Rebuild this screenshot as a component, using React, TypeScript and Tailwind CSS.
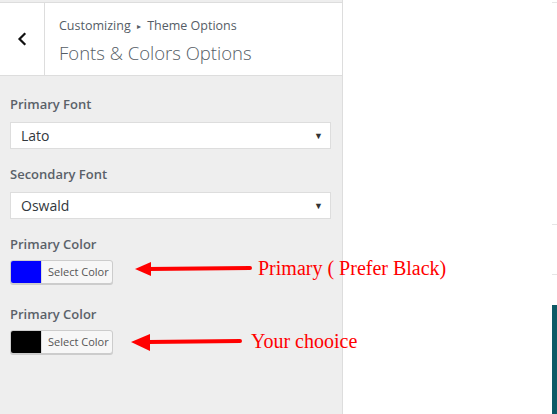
import React from "react";

const ui = { fontFamily: '"Open Sans", "Noto Sans", sans-serif' };
const serif = { fontFamily: '"Liberation Serif", "Times New Roman", serif' };

function Select({ value }: { value: string }) {
  return (
    <div className="w-[321px] h-[27px] bg-white border border-[#dddddd] flex items-center justify-between pl-[10px] pr-[7px] text-[14px] text-[#32373c]">
      <span>{value}</span>
      <span className="text-[9px] text-[#333]">▼</span>
    </div>
  );
}

function ColorButton({ color }: { color: string }) {
  return (
    <div className="w-[103px] h-[24px] flex border border-[#cccccc] rounded-[3px] overflow-hidden bg-[#f7f7f7] shadow-[0_1px_0_#ccc]">
      <div className="w-[30px] h-full" style={{ background: color }} />
      <div className="flex-1 flex items-center pl-[6px] text-[11px] text-[#555] border-l border-[#dddddd]">Select Color</div>
    </div>
  );
}

export default function App() {
  return (
    <div className="relative w-[557px] h-[414px] flex bg-white overflow-hidden" style={ui}>
      <div className="w-[343px] h-full bg-[#eeeeee] border-r border-[#dddddd] pt-[2px] flex flex-col">
        <div className="h-[74px] bg-white border-t border-b border-[#dddddd] flex">
          <div className="w-[45px] border-r border-[#dddddd] flex items-center justify-center">
            <svg width="12" height="14" viewBox="0 0 12 14">
              <path d="M8.5 2 L3.5 7 L8.5 12" fill="none" stroke="#111" strokeWidth="2.2" strokeLinecap="square" />
            </svg>
          </div>
          <div className="pl-[14px] pt-[14px] flex flex-col">
            <div className="text-[12.5px] leading-[18px] text-[#555d66]">
              Customizing <span className="text-[8px] align-[1px] mx-[3px]">▸</span> Theme Options
            </div>
            <div className="text-[18.5px] leading-[26px] mt-[5px] text-[#555d66] font-light">Fonts &amp; Colors Options</div>
          </div>
        </div>
        <div className="pl-[10px] pt-[18px] flex flex-col">
          <div className="text-[13px] leading-[20px] font-semibold text-[#5a6169]">Primary Font</div>
          <div className="mt-[8px]"><Select value="Lato" /></div>
          <div className="mt-[15px] text-[13px] leading-[20px] font-semibold text-[#5a6169]">Secondary Font</div>
          <div className="mt-[8px]"><Select value="Oswald" /></div>
          <div className="mt-[15px] text-[13px] leading-[20px] font-semibold text-[#5a6169]">Primary Color</div>
          <div className="mt-[6px]"><ColorButton color="#0000ff" /></div>
          <div className="mt-[20px] text-[13px] leading-[20px] font-semibold text-[#5a6169]">Primary Color</div>
          <div className="mt-[6px]"><ColorButton color="#000000" /></div>
        </div>
      </div>
      <div className="flex-1 flex justify-end">
        <div className="w-[5px] flex flex-col">
          <div className="mt-[2px] h-[1px] bg-[#e5e5e5]" />
          <div className="mt-[221px] h-[1px] bg-[#e5e5e5]" />
          <div className="mt-[49px] h-[1px] bg-[#e5e5e5]" />
          <div className="mt-[30px] flex-1 bg-[#0e5a66]" />
        </div>
      </div>

      <svg className="absolute left-0 top-0 pointer-events-none" width="557" height="414">
        <line x1="148" y1="269" x2="250" y2="268" stroke="#ff0000" strokeWidth="4" strokeLinecap="round" />
        <polygon points="135,269 151,262 151,276" fill="#ff0000" />
        <line x1="148" y1="342" x2="240" y2="341" stroke="#ff0000" strokeWidth="4" strokeLinecap="round" />
        <polygon points="131,342 150,334 150,351" fill="#ff0000" />
      </svg>
      <div className="absolute left-[258px] top-[255px] text-[20px] leading-[26px] text-[#ff0000] whitespace-nowrap" style={serif}>
        Primary ( Prefer Black)
      </div>
      <div className="absolute left-[251px] top-[328px] text-[20px] leading-[26px] text-[#ff0000] whitespace-nowrap" style={serif}>
        Your chooice
      </div>
    </div>
  );
}
